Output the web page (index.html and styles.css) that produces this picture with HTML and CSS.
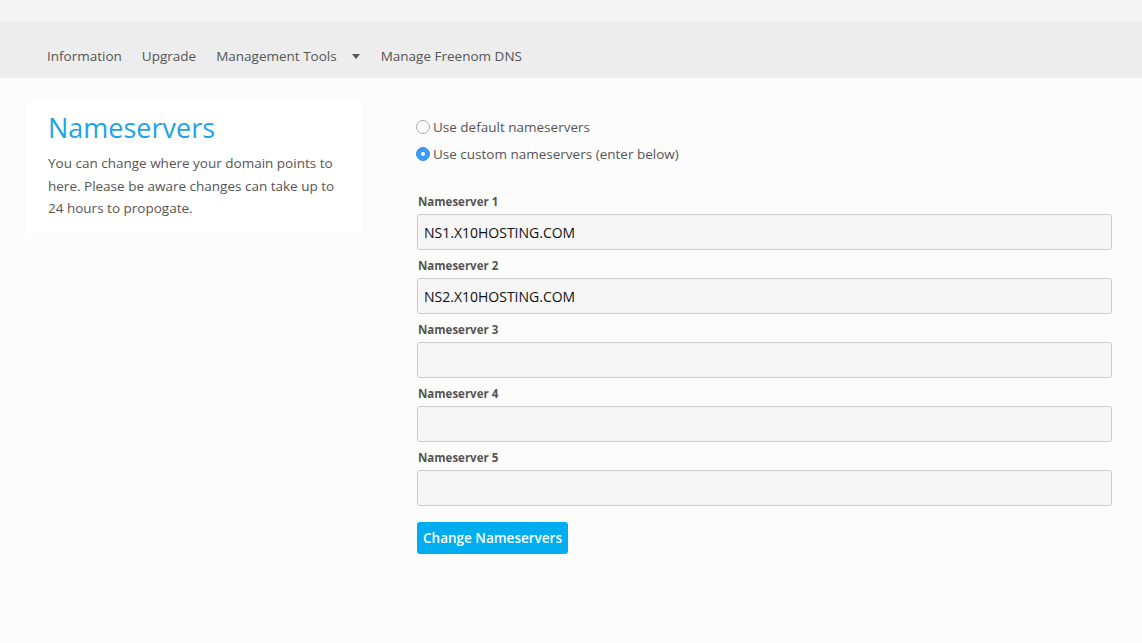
FILE: index.html
```html
<!DOCTYPE html>
<html lang="en">
<head>
<meta charset="utf-8">
<title>Nameservers</title>
<link rel="stylesheet" href="styles.css">
</head>
<body>
<div class="topstrip"></div>
<nav class="nav">
  <a class="nav-item">Information</a>
  <a class="nav-item">Upgrade</a>
  <a class="nav-item nav-drop">Management Tools <span class="caret"></span></a>
  <a class="nav-item">Manage Freenom DNS</a>
</nav>
<main class="page">
  <section class="card">
    <h1 class="card-title">Nameservers</h1>
    <p class="card-text">You can change where your domain points to here. Please be aware changes can take up to 24 hours to propogate.</p>
  </section>
  <form class="ns-form">
    <div class="radios">
      <label class="radio-row"><input type="radio" name="ns" class="radio"> Use default nameservers</label>
      <label class="radio-row"><input type="radio" name="ns" class="radio" checked> Use custom nameservers (enter below)</label>
    </div>
    <div class="field">
      <label class="field-label">Nameserver 1</label>
      <input class="field-input" type="text" value="NS1.X10HOSTING.COM">
    </div>
    <div class="field">
      <label class="field-label">Nameserver 2</label>
      <input class="field-input" type="text" value="NS2.X10HOSTING.COM">
    </div>
    <div class="field">
      <label class="field-label">Nameserver 3</label>
      <input class="field-input" type="text">
    </div>
    <div class="field">
      <label class="field-label">Nameserver 4</label>
      <input class="field-input" type="text">
    </div>
    <div class="field">
      <label class="field-label">Nameserver 5</label>
      <input class="field-input" type="text">
    </div>
    <button type="button" class="btn">Change Nameservers</button>
  </form>
</main>
</body>
</html>
```
FILE: styles.css
```css
* { box-sizing: border-box; }
html, body { margin: 0; padding: 0; }
body {
  background: #fcfcfc;
  font-family: "Open Sans", "Liberation Sans", sans-serif;
  color: #555;
  height: 643px;
  overflow: hidden;
}
.topstrip { height: 22px; background: #f4f4f4; }
.nav {
  height: 56px;
  background: #ededed;
  display: flex;
  align-items: center;
  padding-left: 47px;
  padding-top: 12px;
  gap: 20px;
  font-size: 13.5px;
}
.nav-item { color: #555; text-decoration: none; display: flex; align-items: center; }
.caret {
  display: inline-block;
  width: 0; height: 0;
  border-left: 4px solid transparent;
  border-right: 4px solid transparent;
  border-top: 5px solid #555;
  margin-left: 15px;
  margin-right: 1px;
  margin-top: 1px;
}
.page {
  display: grid;
  grid-template-columns: 335px 1fr;
  column-gap: 55px;
  padding: 23px 30px 0 27px;
  align-items: start;
}
.card {
  background: #fff;
  padding: 8px 21px 13px;
  border-radius: 3px;
}
.card-title {
  margin: 0 0 5px;
  font-size: 27px;
  font-weight: 400;
  color: #1ea4e6;
  line-height: 38px;
}
.card-text {
  margin: 0;
  font-size: 13.5px;
  line-height: 22.5px;
  color: #555;
}
.ns-form { padding-top: 12px; }
.radios { margin-bottom: 27px; margin-left: -1px; }
.radio-row {
  display: flex;
  align-items: center;
  height: 27px;
  font-size: 13.5px;
  color: #555;
}
.radio {
  appearance: none;
  -webkit-appearance: none;
  width: 14px; height: 14px;
  margin: 0 3px 0 0;
  border: 1px solid #a9a9a9;
  border-radius: 50%;
  background: #fff;
  position: relative;
}
.radio:checked {
  background: #3b99fc;
  border-color: #3b8fe8;
}
.radio:checked::after {
  content: "";
  position: absolute;
  width: 4px; height: 4px;
  border-radius: 50%;
  background: #fff;
  left: 4px; top: 4px;
}
.field { margin-bottom: 8px; }
.field-label {
  display: block;
  font-size: 11.5px;
  font-weight: 700;
  line-height: 16px;
  color: #555;
  margin-bottom: 4px;
  padding-left: 1px;
}
.field-input {
  display: block;
  width: 100%;
  height: 36px;
  border: 1px solid #cccccc;
  border-radius: 3px;
  background: #f6f6f6;
  font-family: "Open Sans", "Liberation Sans", sans-serif;
  font-size: 14px;
  color: #111;
  padding: 0 6px;
  outline: none;
}
.btn {
  margin-top: 8px;
  height: 32px;
  width: 151px;
  border: none;
  border-radius: 3px;
  background: #00aeef;
  color: #fff;
  font-family: "Open Sans", "Liberation Sans", sans-serif;
  font-size: 13.5px;
  font-weight: 600;
  padding: 0;
}
```
